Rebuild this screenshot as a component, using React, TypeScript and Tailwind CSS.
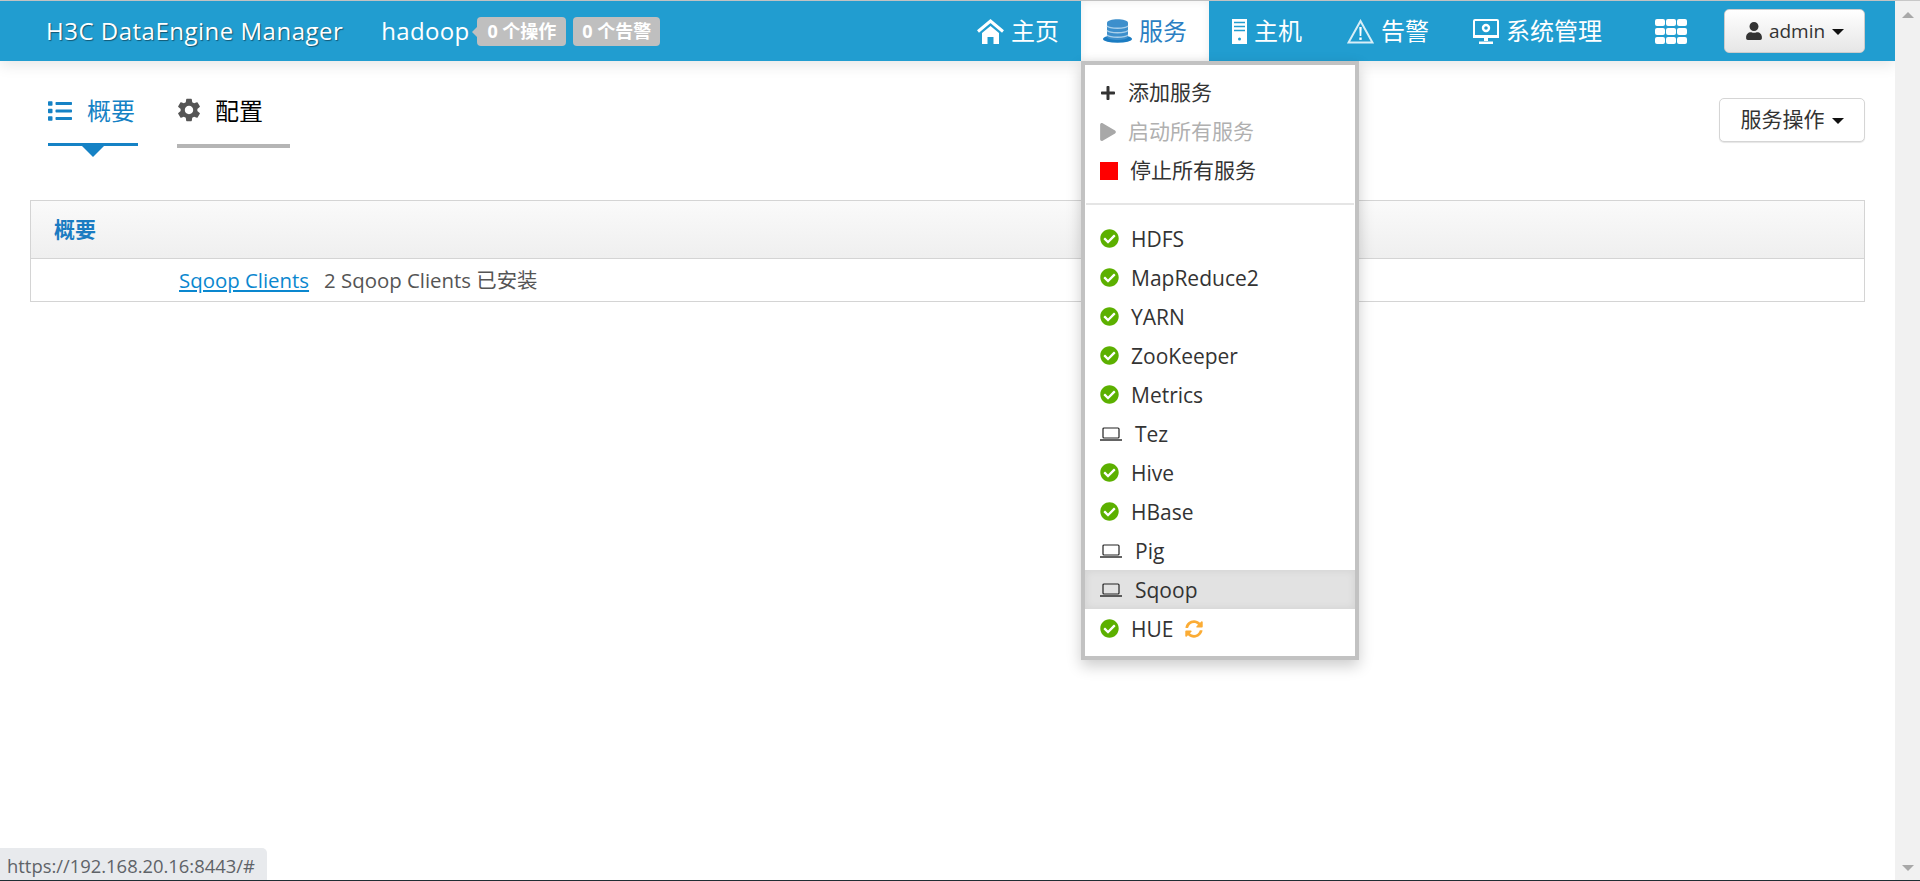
import { FaCheckCircle, FaList, FaPlay, FaPlus, FaSyncAlt, FaUser } from "react-icons/fa";
import { MdSettings } from "react-icons/md";

const font = "font-['Open_Sans','Noto_Sans_CJK_SC',sans-serif]";

function HomeIcon() {
  return (
    <svg width="27" height="25" viewBox="0 0 27 25" className="shrink-0">
      <path d="M1 12.500 13.500 2 26 12.500" fill="none" stroke="#fff" strokeWidth="3" />
      <path d="M5 14 13.500 7 22 14v11h-5.500v-7h-6v7H5z" fill="#fff" />
    </svg>
  );
}

function DbIcon() {
  return (
    <svg width="29" height="24" viewBox="0 0 29 24" className="shrink-0">
      <ellipse cx="14.500" cy="20" rx="14.500" ry="3.800" fill="#1b7cc2" />
      <path d="M4 4c0-5 21-5 21 0v14c0 4-21 4-21 0z" fill="#3d8fcc" />
      <path d="M4 7c3 3 18 3 21 0M4 11.500c3 3 18 3 21 0M4 16c3 3 18 3 21 0" fill="none" stroke="#a9cfea" strokeWidth="1.400" />
    </svg>
  );
}

function ServerIcon() {
  return (
    <svg width="15" height="25" viewBox="0 0 15 25" className="shrink-0">
      <rect width="15" height="25" fill="#fff" />
      <path d="M2 3.500h11M2 7.500h11M2 11.500h11" stroke="#219dd0" strokeWidth="1.500" />
      <circle cx="7.500" cy="20" r="1.500" fill="#219dd0" />
    </svg>
  );
}

function WarnIcon() {
  return (
    <svg width="27" height="25" viewBox="0 0 27 25" className="shrink-0">
      <path d="M13.500 2 1.500 23.500h24z" fill="none" stroke="#d8eef7" strokeWidth="2" />
      <path d="M12.300 8h2.400l-.4 9h-1.600z" fill="#fff" />
      <rect x="12.300" y="18.500" width="2.400" height="2.400" fill="#fff" />
    </svg>
  );
}

function MonitorIcon() {
  return (
    <svg width="26" height="25" viewBox="0 0 26 25" className="shrink-0">
      <rect x="1" y="1" width="24" height="17" rx="1" fill="#219dd0" stroke="#fff" strokeWidth="2" />
      <path d="M0 16h26v3H0zM11 19h4v3h-4zM6 22.500h14V25H6z" fill="#fff" />
      <circle cx="13" cy="9" r="3" fill="none" stroke="#fff" strokeWidth="2.400" />
    </svg>
  );
}

function GridIcon() {
  const cells = [0, 1, 2, 3, 4, 5, 6, 7, 8];
  return (
    <div className="grid grid-cols-[repeat(3,10px)] grid-rows-[repeat(3,7px)] gap-x-[1px] gap-y-[2px]">
      {cells.map((c) => (
        <span key={c} className="rounded-[2px] bg-white" />
      ))}
    </div>
  );
}

function LaptopIcon() {
  return (
    <svg width="22" height="14" viewBox="0 0 22 14" className="shrink-0">
      <rect x="3" y="1" width="16" height="10" rx="1" fill="none" stroke="#222" strokeWidth="1.200" />
      <path d="M0 13h22" stroke="#222" strokeWidth="1.400" />
    </svg>
  );
}

function Check() {
  return <FaCheckCircle className="mr-[-1px] shrink-0 text-[19px] text-[#5cb000]" />;
}

function Caret() {
  return <span className="ml-[7px] mt-[2px] h-0 w-0 border-x-[6px] border-t-[6px] border-x-transparent border-t-[#111]" />;
}

const navItems = [
  { label: "主页", icon: <HomeIcon />, cls: "flex h-full items-center gap-[7px] px-[22px]" },
  {
    label: "服务",
    icon: <DbIcon />,
    cls: "flex h-full items-center gap-[7px] bg-white px-[22px] text-[#2b7fc3] shadow-[inset_0_0_8px_rgba(0,0,0,0.08)]",
  },
  { label: "主机", icon: <ServerIcon />, cls: "flex h-full items-center gap-[7px] pl-[23px] pr-[22px]" },
  { label: "告警", icon: <WarnIcon />, cls: "flex h-full items-center gap-[7px] pl-[23px] pr-[22px]" },
  { label: "系统管理", icon: <MonitorIcon />, cls: "flex h-full items-center gap-[7px] px-[22px]" },
];

const services = [
  { name: "HDFS", laptop: false },
  { name: "MapReduce2", laptop: false },
  { name: "YARN", laptop: false },
  { name: "ZooKeeper", laptop: false },
  { name: "Metrics", laptop: false },
  { name: "Tez", laptop: true },
  { name: "Hive", laptop: false },
  { name: "HBase", laptop: false },
  { name: "Pig", laptop: true },
  { name: "Sqoop", laptop: true },
  { name: "HUE", laptop: false },
];

function ServiceMenu() {
  return (
    <div className="absolute left-[1081px] top-[61px] z-20 h-[599px] w-[278px] border-4 border-[#c2c2c2] bg-white pt-[8px] text-[21px] text-[#333] shadow-[0_6px_14px_rgba(0,0,0,0.2)]">
      <div className="flex h-[39px] items-center pl-[15px]">
        <FaPlus className="w-[16px] text-[16px]" />
        <span className="ml-[12px]">添加服务</span>
      </div>
      <div className="flex h-[39px] items-center pl-[15px] text-[#b0b0b0]">
        <FaPlay className="w-[16px] text-[18px] text-[#a8a8a8]" />
        <span className="ml-[12px]">启动所有服务</span>
      </div>
      <div className="flex h-[39px] items-center pl-[15px]">
        <span className="h-[18px] w-[18px] bg-[#ff0000]" />
        <span className="ml-[12px]">停止所有服务</span>
      </div>
      <div className="mx-[1px] mb-[14px] mt-[13px] h-[2px] bg-[#e5e5e5]" />
      {services.map((s) => (
        <div
          key={s.name}
          className={
            s.name === "Sqoop"
              ? "flex h-[39px] items-center bg-[#e2e2e2] pl-[15px] shadow-[inset_0_0_8px_rgba(0,0,0,0.08)]"
              : "flex h-[39px] items-center pl-[15px]"
          }
        >
          {s.laptop ? <LaptopIcon /> : <Check />}
          <span className="ml-[13px] pt-[2px]">{s.name}</span>
          {s.name === "HUE" && <FaSyncAlt className="ml-[12px] text-[18px] text-[#fbac35]" />}
        </div>
      ))}
    </div>
  );
}

export default function App() {
  return (
    <div className={`relative flex h-[881px] w-[1920px] flex-col overflow-hidden bg-white ${font}`}>
      <div className="h-px bg-[#c8c8c8]" />
      <div className="flex min-h-0 flex-1">
        <div className="min-w-0 flex-1">
          <header className="flex h-[60px] items-center bg-[#219dd0] pl-[46px] pr-[30px] text-white shadow-[0_4px_14px_rgba(0,0,0,0.1)]">
            <span className="text-[24px] tracking-[0.5px] [text-shadow:1px_1px_1px_rgba(0,0,0,0.45)]">H3C DataEngine Manager</span>
            <span className="ml-[38px] text-[24px] tracking-[0.3px]">hadoop</span>
            <span className="relative ml-[8px] rounded-[4px] bg-[#bfbfbf] px-[10px] py-[1px] text-[18px] font-bold">
              <span className="absolute -left-[5px] top-[10px] h-0 w-0 border-y-[5px] border-r-[5px] border-y-transparent border-r-[#bfbfbf]" />
              0 个操作
            </span>
            <span className="ml-[7px] rounded-[4px] bg-[#bfbfbf] px-[9px] py-[1px] text-[18px] font-bold">0 个告警</span>
            <nav className="ml-auto flex h-full items-center text-[24px]">
              {navItems.map((n) => (
                <a key={n.label} className={n.cls}>
                  {n.icon}
                  {n.label}
                </a>
              ))}
            </nav>
            <div className="ml-[31px]">
              <GridIcon />
            </div>
            <button className="ml-[37px] flex h-[44px] w-[141px] items-center justify-center rounded-[5px] border border-[#ccc] bg-gradient-to-b from-white to-[#e6e6e6] text-[19px] text-[#333]">
              <FaUser className="mr-[6px] text-[18px]" />
              admin
              <Caret />
            </button>
          </header>

          <div className="flex h-[139px] items-start justify-between px-[30px]">
            <div className="flex pl-[18px] pt-[32px] text-[24px]">
              <div className="relative h-[53px] w-[90px] border-b-[3px] border-[#1582c5] text-[#1582c5]">
                <div className="flex items-center">
                  <FaList className="text-[24px]" />
                  <span className="ml-[15px]">概要</span>
                </div>
                <span className="absolute left-[34px] top-[53px] h-0 w-0 border-x-[11px] border-t-[11px] border-x-transparent border-t-[#1582c5]" />
              </div>
              <div className="ml-[39px] h-[55px] w-[113px] border-b-4 border-[#b5b5b5] text-black">
                <div className="flex items-center">
                  <MdSettings className="-ml-[2px] -mt-[3px] text-[28px] text-[#555]" />
                  <span className="ml-[12px]">配置</span>
                </div>
              </div>
            </div>
            <button className="mt-[37px] flex h-[44px] w-[146px] items-center justify-center rounded-[5px] border border-[#d5d5d5] bg-white text-[21px] text-[#333] shadow-[0_1px_1px_rgba(0,0,0,0.1)]">
              服务操作
              <Caret />
            </button>
          </div>

          <div className="mx-[30px] border border-[#d4d4d4]">
            <div className="flex h-[58px] items-center border-b border-[#d4d4d4] bg-gradient-to-b from-[#fafafa] to-[#efefef] pl-[23px] text-[21px] font-bold text-[#1b7cc2]">
              概要
            </div>
            <div className="flex h-[42px] items-center pl-[148px] text-[20.4px] text-[#555]">
              <a className="text-[#0a87cf] underline">Sqoop Clients</a>
              <span className="ml-[15px]">2 Sqoop Clients 已安装</span>
            </div>
          </div>
        </div>

        <div className="flex w-[25px] flex-col items-center justify-between bg-[#f1f1f1] pb-[9px] pt-[11px]">
          <span className="h-0 w-0 border-x-[6px] border-b-[6px] border-x-transparent border-b-[#a8a8a8]" />
          <span className="h-0 w-0 border-x-[6px] border-t-[6px] border-x-transparent border-t-[#a8a8a8]" />
        </div>
      </div>
      <div className="h-px bg-[#1f2d33]" />

      <ServiceMenu />
      <div className="absolute bottom-px left-0 z-10 flex h-[32px] w-[267px] items-center rounded-tr-[5px] bg-[#e8eaed] pl-[7px] pt-[3px] text-[18.4px] text-[#5f6368]">
        https://192.168.20.16:8443/#
      </div>
    </div>
  );
}
